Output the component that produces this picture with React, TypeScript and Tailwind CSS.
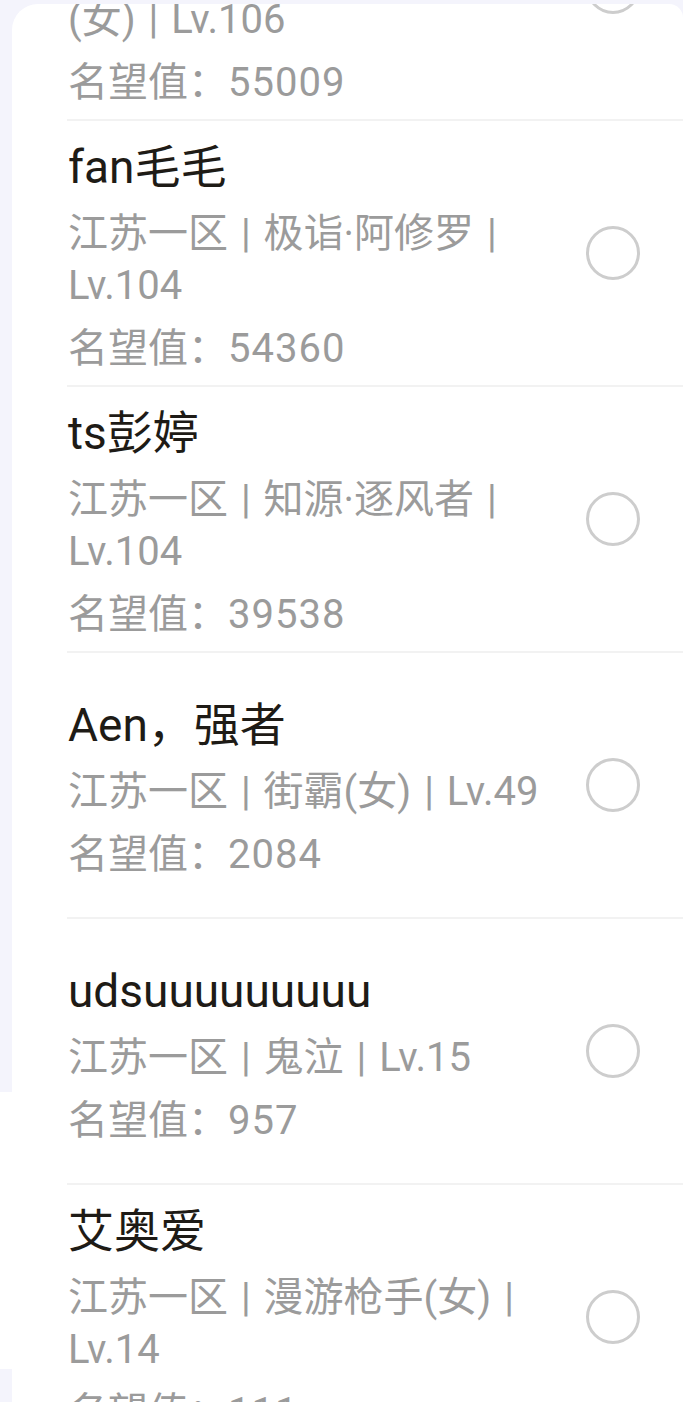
import React from "react";

type Player = {
  name: string;
  lines: string[];
  fame: number;
};

// list is scrolled: the first entry is partly above the card edge
const PLAYERS: Player[] = [
  { name: "小雨点", lines: ["江苏一区 | 缪斯·星韵", "(女) | Lv.106"], fame: 55009 },
  { name: "fan毛毛", lines: ["江苏一区 | 极诣·阿修罗 |", "Lv.104"], fame: 54360 },
  { name: "ts彭婷", lines: ["江苏一区 | 知源·逐风者 |", "Lv.104"], fame: 39538 },
  { name: "Aen，强者", lines: ["江苏一区 | 街霸(女) | Lv.49"], fame: 2084 },
  { name: "udsuuuuuuuuu", lines: ["江苏一区 | 鬼泣 | Lv.15"], fame: 957 },
  { name: "艾奥爱", lines: ["江苏一区 | 漫游枪手(女) |", "Lv.14"], fame: 111 },
];

const FONT = "font-['Roboto','Noto_Sans_CJK_SC',sans-serif]";

const PlayerRow: React.FC<{ player: Player }> = ({ player }) => (
  <div className="ml-[55px] h-[266px] border-b-2 border-[#f2f2f2] flex items-center pl-[1px] pr-[43px]">
    <div className="flex-1 min-w-0 pt-[6px]">
      <div className="text-[46px] leading-[60px] text-[#1e1b16] whitespace-nowrap">{player.name}</div>
      <div className="mt-[11px] text-[40px] leading-[52px] text-[#9b9b9b] [word-spacing:3px]">
        {player.lines.map((line, i) => (
          <div key={i} className="whitespace-nowrap">
            {line}
          </div>
        ))}
      </div>
      <div className="mt-[11px] text-[40px] leading-[52px] text-[#9b9b9b] whitespace-nowrap">
        名望值：<span className="tracking-[1px]">{player.fame}</span>
      </div>
    </div>
    <span className="w-[54px] h-[54px] rounded-full border-[3px] border-[#cdcdcd] shrink-0" />
  </div>
);

export default function App() {
  return (
    <div className={`flex h-[1402px] overflow-hidden bg-[#f4f4fc] ${FONT}`}>
      <div className="w-3 shrink-0 flex flex-col">
        <div className="h-[1092px] bg-[#f4f4fc]" />
        <div className="h-[277px] bg-white" />
        <div className="flex-1 bg-[#f4f4fc]" />
      </div>
      <div className="flex-1 mt-1 bg-white rounded-tl-[26px] rounded-tr-[14px] overflow-hidden">
        <div className="-mt-[149px]">
          {PLAYERS.map((p) => (
            <PlayerRow key={p.name} player={p} />
          ))}
        </div>
      </div>
    </div>
  );
}
